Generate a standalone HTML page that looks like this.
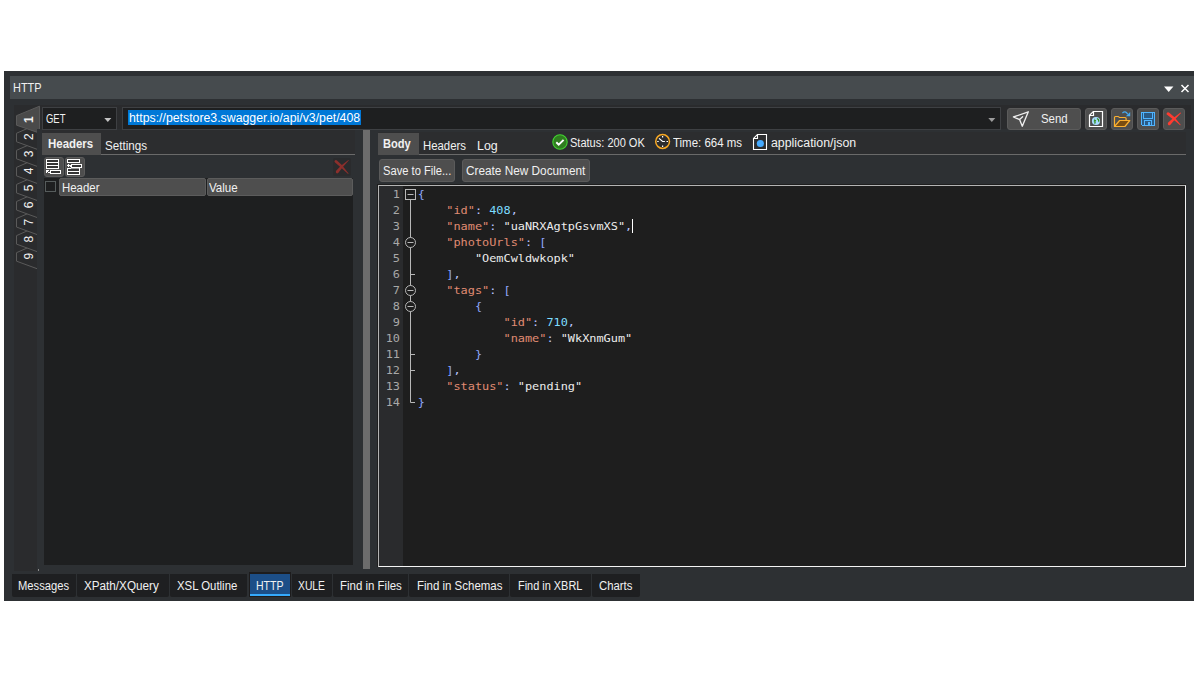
<!DOCTYPE html>
<html lang="en">
<head>
<meta charset="utf-8">
<title>HTTP</title>
<style>
*{box-sizing:border-box;margin:0;padding:0}
html,body{width:1198px;height:673px;overflow:hidden;background:#fff}
body{position:relative;font-family:"Liberation Sans",sans-serif;font-size:12px;color:#f0f0f0}
.a{position:absolute}
.t{position:absolute;white-space:nowrap;line-height:14px;height:14px;color:#f1f1f1;transform-origin:0 50%}
#panel{left:4px;top:71px;width:1190px;height:530px;background:#2d3033}
#title{left:10px;top:76px;width:1184px;height:23px;background:#464b4e}
#inner{left:14px;top:105px;width:1177px;height:466px;background:#2a2b2d}
#page{left:37px;top:129px;width:1154px;height:442px;background:#2d3033}
.box{background:#1e1f20;border:1px solid #3e4043}
.btn{background:#4e4e4e;border:1px solid #5b5b5b;border-radius:3px}
.tabsel{background:#4e4e4e}
.mono{font-family:"DejaVu Sans Mono","Liberation Mono",monospace;font-size:11.88px}
.ln{transform:scaleY(.925);transform-origin:0 12px;position:absolute;left:379px;width:21px;text-align:right;height:16px;line-height:16px;color:#a8a8a8;white-space:pre}
.cl{transform:scaleY(.925);transform-origin:0 12px;position:absolute;left:417.7px;height:16px;line-height:16px;white-space:pre;color:#e4e4e4}
.k{color:#e08c73}.p{color:#bcc6ff}.b{color:#8fa6fa}.n{color:#7cdcff}.s{color:#ececec}
.bt{position:absolute;top:574px;height:23px;background:#1e1f21;border-radius:0 0 2px 2px}
</style>
</head>
<body>
<div class="a" id="panel"></div>
<div class="a" id="title"></div>
<div class="t" style="left:13.11px;top:81px;font-size:12.3px;transform:scaleX(0.890)">HTTP</div>
<svg class="a" style="left:1160px;top:80px" width="34" height="16" viewBox="0 0 34 16">
<path d="M4 6.5h9.4L8.7 12z" fill="#fff"/>
<path d="M21.5 5l7 7M28.5 5l-7 7" stroke="#fff" stroke-width="1.5" fill="none"/>
</svg>
<div class="a" id="inner"></div>
<!-- vertical tabs -->
<svg class="a" id="vtabs" style="left:14px;top:105px" width="26" height="170" viewBox="0 0 26 170">
<path d="M23 138.68L2.5 147.68V156.18L23 163.68" fill="#2a2b2d" stroke="#5a5a5a" stroke-width="1" stroke-linejoin="round"/>
<path d="M23 121.62L2.5 130.62V139.12L23 146.62" fill="#2a2b2d" stroke="#5a5a5a" stroke-width="1" stroke-linejoin="round"/>
<path d="M23 104.56L2.5 113.56V122.06L23 129.56" fill="#2a2b2d" stroke="#5a5a5a" stroke-width="1" stroke-linejoin="round"/>
<path d="M23 87.5L2.5 96.5V105.0L23 112.5" fill="#2a2b2d" stroke="#5a5a5a" stroke-width="1" stroke-linejoin="round"/>
<path d="M23 70.44L2.5 79.44V87.94L23 95.44" fill="#2a2b2d" stroke="#5a5a5a" stroke-width="1" stroke-linejoin="round"/>
<path d="M23 53.379999999999995L2.5 62.379999999999995V70.88L23 78.38" fill="#2a2b2d" stroke="#5a5a5a" stroke-width="1" stroke-linejoin="round"/>
<path d="M23 36.32L2.5 45.32V53.82L23 61.32" fill="#2a2b2d" stroke="#5a5a5a" stroke-width="1" stroke-linejoin="round"/>
<path d="M23 19.26L2.5 28.26V36.760000000000005L23 44.260000000000005" fill="#2a2b2d" stroke="#5a5a5a" stroke-width="1" stroke-linejoin="round"/>
<path d="M25.5 1.1999999999999993L2.5 10.7V20.2L23 27.2H25.5z" fill="#4a4a4a" stroke="#5a5a5a" stroke-width="1"/>
<text x="0" y="0" transform="translate(19 14.7) rotate(-90)" text-anchor="middle" font-family="Liberation Sans, sans-serif" font-size="12" fill="#f1f1f1" font-weight="bold">1</text>
<text x="0" y="0" transform="translate(19 31.76) rotate(-90)" text-anchor="middle" font-family="Liberation Sans, sans-serif" font-size="12" fill="#f1f1f1">2</text>
<text x="0" y="0" transform="translate(19 48.82) rotate(-90)" text-anchor="middle" font-family="Liberation Sans, sans-serif" font-size="12" fill="#f1f1f1">3</text>
<text x="0" y="0" transform="translate(19 65.88) rotate(-90)" text-anchor="middle" font-family="Liberation Sans, sans-serif" font-size="12" fill="#f1f1f1">4</text>
<text x="0" y="0" transform="translate(19 82.94) rotate(-90)" text-anchor="middle" font-family="Liberation Sans, sans-serif" font-size="12" fill="#f1f1f1">5</text>
<text x="0" y="0" transform="translate(19 100.0) rotate(-90)" text-anchor="middle" font-family="Liberation Sans, sans-serif" font-size="12" fill="#f1f1f1">6</text>
<text x="0" y="0" transform="translate(19 117.06) rotate(-90)" text-anchor="middle" font-family="Liberation Sans, sans-serif" font-size="12" fill="#f1f1f1">7</text>
<text x="0" y="0" transform="translate(19 134.12) rotate(-90)" text-anchor="middle" font-family="Liberation Sans, sans-serif" font-size="12" fill="#f1f1f1">8</text>
<text x="0" y="0" transform="translate(19 151.18) rotate(-90)" text-anchor="middle" font-family="Liberation Sans, sans-serif" font-size="12" fill="#f1f1f1">9</text>
</svg>
<div class="a" id="page"></div>

<!-- request row -->
<div class="a box" style="left:42px;top:107px;width:75px;height:23px"></div>
<div class="t" style="left:45.50px;top:112px;transform:scaleX(0.789)">GET</div>
<svg class="a" style="left:104px;top:118px" width="8" height="5"><path d="M.3 0h7L3.8 4z" fill="#c4c4c4"/></svg>
<div class="a box" style="left:122px;top:107px;width:879px;height:23px"></div>
<div class="a" style="left:128px;top:110px;width:233px;height:15px;background:#0078d7"></div>
<div class="t" id="url" style="left:128.50px;top:111px;color:#fff;transform:scaleX(1.025)">https://petstore3.swagger.io/api/v3/pet/408</div>
<svg class="a" style="left:988px;top:118px" width="8" height="5"><path d="M.3 0h7L3.8 4z" fill="#9c9c9c"/></svg>

<!-- send + toolbar -->
<div class="a btn" style="left:1007px;top:108px;width:74px;height:22px"></div>
<div class="t" style="left:1041.00px;top:112px;transform:scaleX(0.951)">Send</div>
<div class="a btn" style="left:1085px;top:108px;width:22px;height:22px"></div>
<div class="a btn" style="left:1111px;top:108px;width:22px;height:22px"></div>
<div class="a btn" style="left:1137px;top:108px;width:22px;height:22px"></div>
<div class="a btn" style="left:1163px;top:108px;width:22px;height:22px"></div>


<!-- left pane -->
<div class="a" style="left:42px;top:130px;width:313px;height:25px;background:#2c2d2f;border-bottom:1px solid #6a6a6a"></div>
<div class="a tabsel" style="left:42px;top:133px;width:59px;height:21.5px"></div>
<div class="t" style="left:47.50px;top:137px;font-weight:bold;transform:scaleX(0.954)">Headers</div>
<div class="t" style="left:105.00px;top:139px;transform:scaleX(0.969)">Settings</div>
<div class="a btn" style="left:44px;top:157px;width:20px;height:20px"></div>
<div class="a btn" style="left:65px;top:157px;width:20px;height:20px"></div>
<div class="a" style="left:333px;top:158px;width:18px;height:18px;background:#2a2b2d;border-radius:2px"></div>
<div class="a" style="left:44px;top:178px;width:309px;height:387px;background:#1e1f20"></div>
<div class="a" style="left:45px;top:181px;width:11px;height:11px;border:1px solid #565c5c;background:#1e1f20"></div>
<div class="a" style="left:59px;top:178px;width:147px;height:18px;background:#4e4e4e;border:1px solid #5c5c5c;border-radius:2px"></div>
<div class="a" style="left:207px;top:178px;width:146px;height:18px;background:#4e4e4e;border:1px solid #5c5c5c;border-radius:2px"></div>
<div class="t" style="left:61.50px;top:181px;transform:scaleX(0.953)">Header</div>
<div class="t" style="left:209.00px;top:181px;transform:scaleX(0.963)">Value</div>

<div class="a" style="left:38px;top:569px;width:1px;height:2px;background:#8c8c8c"></div>
<!-- splitter -->
<div class="a" style="left:363px;top:130px;width:6.5px;height:439px;background:#6c6c6c"></div>

<!-- right pane -->
<div class="a" style="left:378px;top:132px;width:808px;height:23px;background:#2c2d2f;border-bottom:1px solid #6a6a6a"></div>
<div class="a tabsel" style="left:378px;top:133px;width:40.5px;height:21.5px"></div>
<div class="t" style="left:383.00px;top:137px;font-weight:bold;transform:scaleX(0.923)">Body</div>
<div class="t" style="left:423.00px;top:139px;transform:scaleX(0.948)">Headers</div>
<div class="t" style="left:477.00px;top:139px;transform:scaleX(1.034)">Log</div>
<div class="t" style="left:570.20px;top:136px;transform:scaleX(0.919)">Status: 200 OK</div>
<div class="t" style="left:673.00px;top:136px;transform:scaleX(0.955)">Time: 664 ms</div>
<div class="t" style="left:770.50px;top:136px;transform:scaleX(1.030)">application/json</div>
<div class="a btn" style="left:379px;top:159px;width:76px;height:23px"></div>
<div class="a btn" style="left:462px;top:159px;width:128px;height:23px"></div>
<div class="t" style="left:383.00px;top:164px;transform:scaleX(0.931)">Save to File...</div>
<div class="t" style="left:466.00px;top:164px;transform:scaleX(0.983)">Create New Document</div>

<!-- icons -->
<svg class="a" style="left:1007px;top:108px" width="30" height="22" viewBox="0 0 30 22" fill="none" stroke="#eeeeee" stroke-width="1.35" stroke-linejoin="round" stroke-linecap="round">
<path d="M6.4 9L21.3 3.8L15.3 18.2L12.6 11.6z M12.6 11.6L15.6 8.8"/>
</svg>
<svg class="a" style="left:1085px;top:108px" width="22" height="22" viewBox="0 0 22 22">
<path d="M8.3 3.5H17.5V18.5H4.5V7.3z" fill="none" stroke="#fff" stroke-width="1.2"/>
<path d="M8.5 3.5V7.5H4.5" fill="none" stroke="#fff" stroke-width="1.2"/>
<circle cx="11" cy="13" r="4.1" fill="#a8dcff"/>
<path d="M9.6 10.3l.7 1.6 1 .5-.9 1.1.3 1.1-.8 1.9-.6-1.7.2-1.2-1-.4.6-.9.4 0z M11.9 10.1l1.6.6.9 1.7-.3 2-.8-.9-.5-1.7-.9-.6z" fill="#2a8a0c"/>
</svg>
<svg class="a" style="left:1111px;top:108px" width="22" height="22" viewBox="0 0 22 22">
<path d="M3.5 18.5V9.4q0-.9.9-.9H7q.7 0 1.100.6l.4.4h5.600q1 0 1 1V12.300" fill="none" stroke="#fbb030" stroke-width="1.2"/>
<path d="M3.500 18.500L8.600 12.500H18.800L13.900 18.500z" fill="#7a4d10" stroke="#fbb030" stroke-width="1.200" stroke-linejoin="round"/>
<path d="M11.400 5.100Q14.200 2.100 16.800 6.300" fill="none" stroke="#45aaf2" stroke-width="1.200"/>
<path d="M19.200 3.900V8.200H14.900z" fill="#45aaf2"/>
</svg>
<svg class="a" style="left:1137px;top:108px" width="22" height="22" viewBox="0 0 22 22" shape-rendering="crispEdges">
<path d="M4 4H18V18H5L4 17z" fill="#4fb4ff"/>
<rect x="5" y="5" width="12" height="12" fill="#2a5a85"/>
<rect x="6" y="5" width="1" height="6" fill="#4fb4ff"/><rect x="15" y="5" width="1" height="6" fill="#4fb4ff"/>
<rect x="6" y="10" width="10" height="1" fill="#4fb4ff"/>
<rect x="7" y="12" width="8" height="5" fill="#4fb4ff"/>
<rect x="8" y="13" width="6" height="4" fill="#2a5a85"/>
<rect x="11" y="14" width="2" height="3" fill="#4fb4ff"/>
</svg>
<svg class="a" style="left:1163px;top:108px" width="22" height="22" viewBox="0 0 22 22">
<path d="M3.600 5.400Q4.600 3.700 6.300 4.700L11.800 9.600L17.800 16.900L17.200 17.300L10.300 11.400L4.100 6.800Q3.200 6.100 3.600 5.400z" fill="#ff3b30"/>
<path d="M18.100 4.900L17.600 4.600L10.300 9.900L5.200 14.600Q4.300 15.900 5.300 16.900Q6.300 17.700 7.400 16.700L11.900 11.500z" fill="#ff3b30"/>
</svg>

<svg class="a" style="left:44px;top:157px" width="20" height="20" viewBox="0 0 20 20" shape-rendering="crispEdges">
<rect x="2" y="2" width="13" height="10" fill="#fff"/>
<rect x="3" y="3" width="11" height="2" fill="#353535"/><rect x="3" y="6" width="11" height="2" fill="#353535"/><rect x="3" y="9" width="11" height="2" fill="#353535"/>
<rect x="6" y="13" width="11" height="4" fill="#fff"/><rect x="7" y="14" width="9" height="2" fill="#353535"/>
<path d="M2 13h3v1h-1v1h-1v1h-1z" fill="#fff"/><rect x="4" y="15" width="2" height="1" fill="#fff"/><rect x="3" y="14" width="1" height="1" fill="#fff"/>
</svg>
<svg class="a" style="left:65px;top:157px" width="20" height="20" viewBox="0 0 20 20" shape-rendering="crispEdges">
<rect x="2" y="2" width="13" height="4" fill="#fff"/><rect x="3" y="3" width="11" height="2" fill="#353535"/>
<rect x="2" y="11" width="13" height="7" fill="#fff"/><rect x="3" y="12" width="11" height="2" fill="#353535"/><rect x="3" y="15" width="11" height="2" fill="#353535"/>
<rect x="6" y="11" width="8" height="1" fill="#9a9a9a"/>
<rect x="6" y="7" width="11" height="4" fill="#fff"/><rect x="7" y="8" width="9" height="2" fill="#353535"/>
<rect x="2" y="8" width="4" height="1" fill="#fff"/><rect x="3" y="7" width="1" height="3" fill="#fff"/><rect x="5" y="9" width="1" height="1" fill="#fff"/>
</svg>
<svg class="a" style="left:333px;top:158px" width="18" height="18" viewBox="0 0 18 18">
<g transform="translate(-0.2 -0.9) scale(1.04 1.1)"><path d="M1.700 3.600Q2.600 2.200 4 3L8.700 7.200L15.200 14.900L14.700 15.300L7.500 9.200L2.200 4.900Q1.400 4.300 1.700 3.600z" fill="#8c2f2c"/>
<path d="M15.500 2.900L15 2.600L7.800 7.800L3.200 12.300Q2.500 13.500 3.300 14.500Q4.200 15.200 5.200 14.400L9.300 9.500z" fill="#8c2f2c"/></g>
</svg>

<svg class="a" style="left:551px;top:133px" width="18" height="18" viewBox="0 0 18 18">
<circle cx="9" cy="9" r="7.200" fill="#2f7d1f" stroke="#42d630" stroke-width="1.100"/>
<path d="M5.300 9.300L7.700 11.600L12.600 6.900" fill="none" stroke="#fff" stroke-width="2"/>
</svg>
<svg class="a" style="left:654px;top:133px" width="18" height="18" viewBox="0 0 18 18" fill="none">
<circle cx="8.600" cy="8.500" r="6.900" stroke="#f7a823" stroke-width="1.500"/>
<path d="M8.600 3.100V4.600M8.600 12.400V13.900M3.200 8.500H4.700M12.500 8.500H14" stroke="#fff" stroke-width="1.200"/>
<path d="M5 5.400L8.600 8.500H10.900" stroke="#fff" stroke-width="1.200"/>
</svg>
<svg class="a" style="left:751px;top:132px" width="18" height="20" viewBox="0 0 18 20">
<path d="M6.400 2.500H15.500V17.500H2.500V6.400z" fill="none" stroke="#fff" stroke-width="1.100"/>
<path d="M6.500 2.500V6.500H2.500" fill="none" stroke="#fff" stroke-width="1.100"/>
<circle cx="9.400" cy="11.500" r="3.600" fill="#45aaff"/>
</svg>

<!-- editor -->
<div class="a" id="ed" style="left:377px;top:184px;width:809px;height:383px;background:#1e1e1e"></div>
<div class="a" style="left:379px;top:186px;width:24px;height:380px;background:#2a2b2d"></div>
<div class="a" id="edb" style="left:378px;top:185px;width:808px;height:382px;border:1px solid #b4b4b4;border-right-color:#f4f4f4;border-bottom-color:#f4f4f4"></div>
<div id="code" class="mono">
<div class="ln" style="top:186px">1</div><div class="cl" style="top:186px"><span class="b">{</span></div>
<div class="ln" style="top:202px">2</div><div class="cl" style="top:202px">    <span class="k">&quot;id&quot;</span><span class="p">:</span> <span class="n">408</span><span class="p">,</span></div>
<div class="ln" style="top:218px">3</div><div class="cl" style="top:218px">    <span class="k">&quot;name&quot;</span><span class="p">:</span> <span class="s">&quot;uaNRXAgtpGsvmXS&quot;</span><span class="p">,</span></div>
<div class="ln" style="top:234px">4</div><div class="cl" style="top:234px">    <span class="k">&quot;photoUrls&quot;</span><span class="p">:</span> <span class="b">[</span></div>
<div class="ln" style="top:250px">5</div><div class="cl" style="top:250px">        <span class="s">&quot;OemCwldwkopk&quot;</span></div>
<div class="ln" style="top:266px">6</div><div class="cl" style="top:266px">    <span class="b">]</span><span class="p">,</span></div>
<div class="ln" style="top:282px">7</div><div class="cl" style="top:282px">    <span class="k">&quot;tags&quot;</span><span class="p">:</span> <span class="b">[</span></div>
<div class="ln" style="top:298px">8</div><div class="cl" style="top:298px">        <span class="b">{</span></div>
<div class="ln" style="top:314px">9</div><div class="cl" style="top:314px">            <span class="k">&quot;id&quot;</span><span class="p">:</span> <span class="n">710</span><span class="p">,</span></div>
<div class="ln" style="top:330px">10</div><div class="cl" style="top:330px">            <span class="k">&quot;name&quot;</span><span class="p">:</span> <span class="s">&quot;WkXnmGum&quot;</span></div>
<div class="ln" style="top:346px">11</div><div class="cl" style="top:346px">        <span class="b">}</span></div>
<div class="ln" style="top:362px">12</div><div class="cl" style="top:362px">    <span class="b">]</span><span class="p">,</span></div>
<div class="ln" style="top:378px">13</div><div class="cl" style="top:378px">    <span class="k">&quot;status&quot;</span><span class="p">:</span> <span class="s">&quot;pending&quot;</span></div>
<div class="ln" style="top:394px">14</div><div class="cl" style="top:394px"><span class="b">}</span></div>
<svg class="a" style="left:403px;top:186px" width="16" height="226" viewBox="0 0 16 226" fill="none" stroke="#b8b8b8" stroke-width="1">
<path d="M7.5 14V216.5H12"/>
<rect x="2.5" y="3.5" width="10" height="10" fill="#1e1e1e"/><path d="M4.5 8.5h6"/>
<circle cx="7.5" cy="56.5" r="5" fill="#1e1e1e"/><path d="M4.5 56.5h6"/>
<path d="M7.5 88.5H12"/>
<circle cx="7.5" cy="104.5" r="5" fill="#1e1e1e"/><path d="M4.5 104.5h6"/>
<circle cx="7.5" cy="120.5" r="5" fill="#1e1e1e"/><path d="M4.5 120.5h6"/>
<path d="M7.5 168.5H12M7.5 184.5H12"/>
</svg>
<div class="a" style="left:632px;top:219px;width:1px;height:14px;background:#fff"></div>
</div>

<!-- bottom tabs -->
<div id="btabs">
<div class="bt" style="left:12px;width:64px"></div>
<div class="t" style="left:18.00px;top:579px;transform:scaleX(0.933)">Messages</div>
<div class="bt" style="left:77px;width:92px"></div>
<div class="t" style="left:84.20px;top:579px;transform:scaleX(0.975)">XPath/XQuery</div>
<div class="bt" style="left:170px;width:77px"></div>
<div class="t" style="left:177.00px;top:579px;transform:scaleX(0.948)">XSL Outline</div>
<div class="a" style="left:249px;top:572px;width:42px;height:25px;background:#1d1c1d"></div><div class="a" style="left:250px;top:574px;width:40px;height:22px;background:#1c4e87;border-bottom:2px solid #35a9fb"></div>
<div class="t" style="left:255.50px;top:579px;transform:scaleX(0.878)">HTTP</div>
<div class="bt" style="left:292px;width:40px"></div>
<div class="t" style="left:298.00px;top:579px;transform:scaleX(0.861)">XULE</div>
<div class="bt" style="left:333px;width:75px"></div>
<div class="t" style="left:340.40px;top:579px;transform:scaleX(0.955)">Find in Files</div>
<div class="bt" style="left:409px;width:100px"></div>
<div class="t" style="left:416.60px;top:579px;transform:scaleX(0.956)">Find in Schemas</div>
<div class="bt" style="left:510px;width:81px"></div>
<div class="t" style="left:517.60px;top:579px;transform:scaleX(0.910)">Find in XBRL</div>
<div class="bt" style="left:592px;width:48px"></div>
<div class="t" style="left:599.40px;top:579px;transform:scaleX(0.945)">Charts</div>
</div>
</body>
</html>
